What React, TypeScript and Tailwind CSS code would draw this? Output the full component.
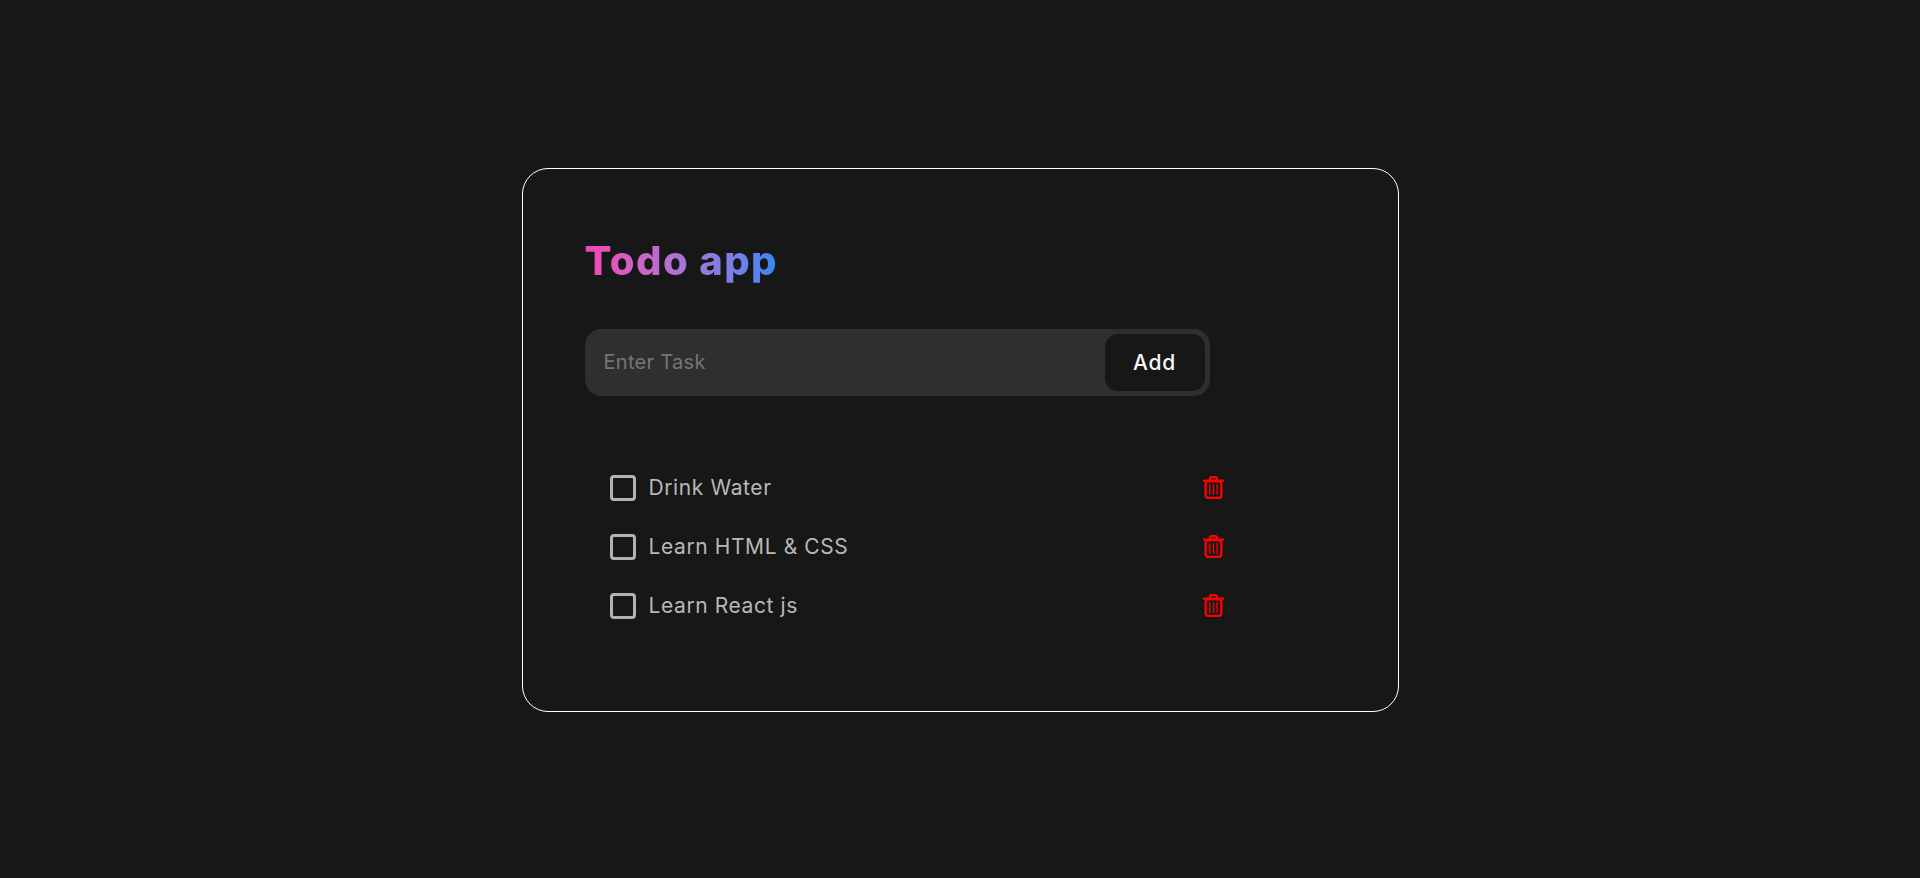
import React, { useState } from 'react';

const initialTasks = ['Drink Water', 'Learn HTML & CSS', 'Learn React js'];

const TrashIcon = () => (
  <svg width="21" height="23" viewBox="0 0 20 22" fill="none" stroke="#ff0000" strokeWidth="2.2">
    <path d="M6.5 4V3c0-1.3 1-2 2.2-2h2.6c1.2 0 2.2.7 2.2 2v1" />
    <path d="M0 4.5h20" />
    <rect x="2.5" y="5" width="15" height="16" rx="2.5" />
    <path d="M6.5 8v10M10 8v10M13.5 8v10" strokeWidth="1.3" />
  </svg>
);

const App: React.FC = () => {
  const [tasks, setTasks] = useState<string[]>(initialTasks);
  const [value, setValue] = useState('');

  const addTask = () => {
    if (!value.trim()) return;
    setTasks([...tasks, value]);
    setValue('');
  };

  return (
    <div className="min-h-screen pt-[2px] bg-[#171717] flex items-center justify-center font-['Inter',sans-serif]">
      <div className="w-[877px] h-[544px] border border-white rounded-[26px] pt-[62px] pl-[62px]">
        <h1 className="h-[60px] w-fit text-[40px] leading-[60px] font-extrabold tracking-[1.4px] bg-gradient-to-r from-[#f542b5] to-[#2f86f5] bg-clip-text text-transparent">
          Todo app
        </h1>

        <div className="mt-[38px] w-[625px] h-[67px] bg-[#2f2f2f] rounded-[16px] p-[5px] pl-[19px] flex items-center">
          <input
            value={value}
            onChange={(e) => setValue(e.target.value)}
            placeholder="Enter Task"
            className="flex-1 min-w-0 pb-[2px] bg-transparent outline-none text-[20px] text-white placeholder:text-[#757575] tracking-[0.3px]"
          />
          <button
            onClick={addTask}
            className="w-[100px] h-[57px] bg-[#171717] rounded-[13px] text-[21px] font-medium text-[#f5f5f5] tracking-[0.8px]"
          >
            Add
          </button>
        </div>

        <ul className="mt-[62px] w-[651px] flex flex-col">
          {tasks.map((task) => (
            <li key={task} className="h-[59px] pl-[25px] pr-[12px] flex items-center">
              <span className="w-[26px] h-[26px] border-[3px] border-[#b3b3b3] rounded-[4px]" />
              <span className="ml-[13px] flex-1 text-[21px] text-[#b8b8b8] tracking-[0.6px]">{task}</span>
              <TrashIcon />
            </li>
          ))}
        </ul>
      </div>
    </div>
  );
};

export default App;
